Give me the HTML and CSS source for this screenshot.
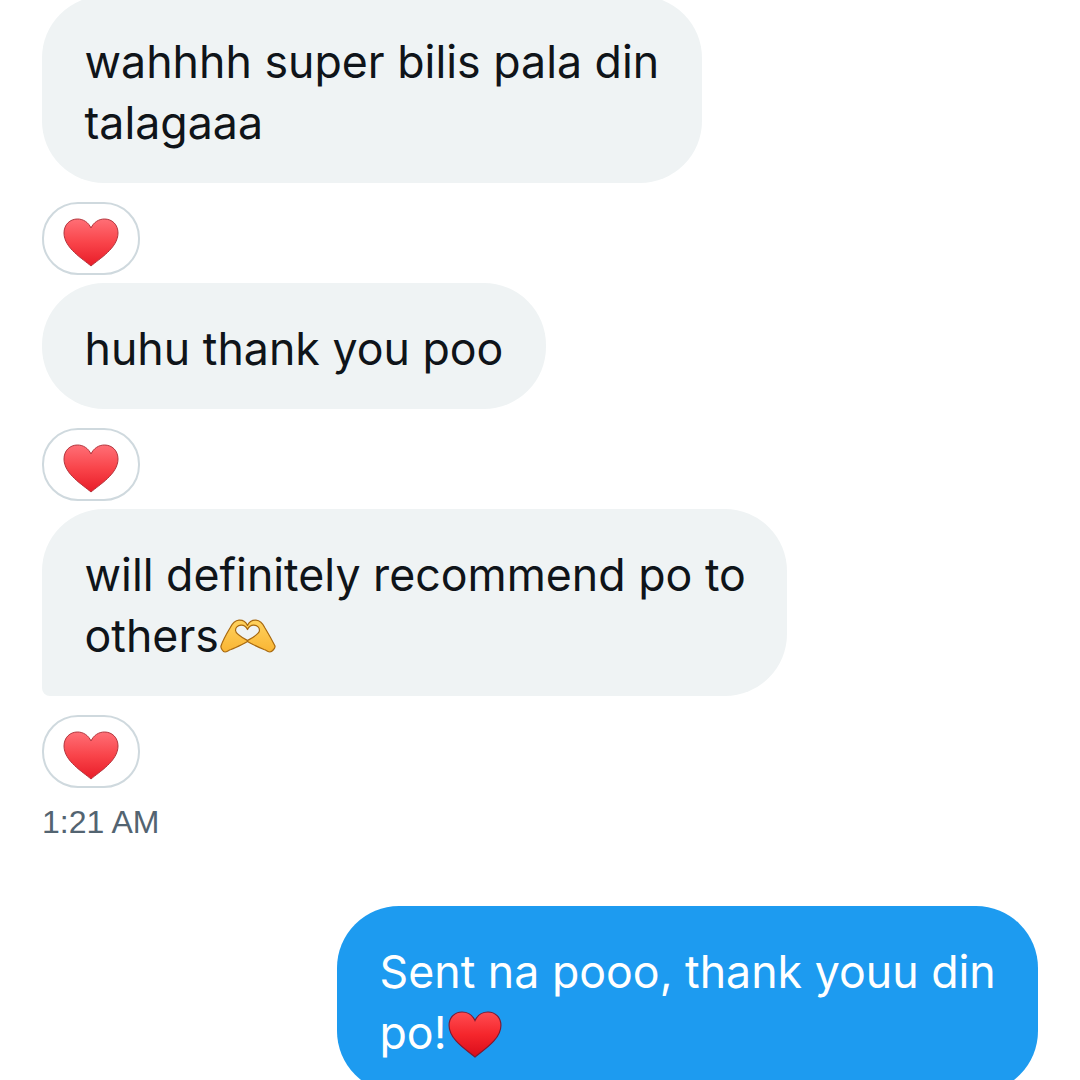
FILE: index.html
```html
<!DOCTYPE html>
<html>
<head>
  <title>Messages</title>
  <link rel="stylesheet" href="styles.css">
</head>
<body>
  <svg class="defs" width="0" height="0">
    <defs>
      <linearGradient id="heart-fill" x1="0" y1="0" x2="0" y2="1">
        <stop offset="0" stop-color="#ff6f76"/>
        <stop offset="0.5" stop-color="#f9444a"/>
        <stop offset="1" stop-color="#e81c28"/>
      </linearGradient>
      <linearGradient id="heart-fill-inline" x1="0" y1="0" x2="0" y2="1">
        <stop offset="0" stop-color="#ff4d52"/>
        <stop offset="0.5" stop-color="#f5262c"/>
        <stop offset="1" stop-color="#d90c1a"/>
      </linearGradient>
      <linearGradient id="hand-fill" x1="0" y1="0" x2="0" y2="1">
        <stop offset="0" stop-color="#ffd25e"/>
        <stop offset="1" stop-color="#f9b534"/>
      </linearGradient>
      <symbol id="heart" viewBox="0 0 56 50">
        <path d="M28 48C20 41 1 30 1 15C1 6.500 7 1 14.500 1C20.500 1 25.500 4.500 28 10C30.500 4.500 35.500 1 41.500 1C49 1 55 6.500 55 15C55 30 36 41 28 48Z" fill="url(#heart-fill)" stroke="#b3343c" stroke-width="1"/>
      </symbol>
      <symbol id="heart-inline" viewBox="0 0 56 50">
        <path d="M28 48C20 41 1 30 1 15C1 6.500 7 1 14.500 1C20.500 1 25.500 4.500 28 10C30.500 4.500 35.500 1 41.500 1C49 1 55 6.500 55 15C55 30 36 41 28 48Z" fill="url(#heart-fill-inline)" stroke="#7a1a34" stroke-width="1.200"/>
      </symbol>
    </defs>
  </svg>

  <div class="thread">
    <div class="bubble bubble-first">wahhhh super bilis pala din<br>talagaaa</div>
    <div class="reaction"><svg class="heart"><use href="#heart"/></svg></div>

    <div class="bubble">huhu thank you poo</div>
    <div class="reaction"><svg class="heart"><use href="#heart"/></svg></div>

    <div class="bubble bubble-last">will definitely recommend po to<br>others<svg class="hands" viewBox="0 0 56 34"><path d="M1 27C3 21 7 14 10 9C12 5 15 1.500 19 1.200C23 1 26 3 27.500 6.500C29 3 32 1 36 1.200C40 1.500 43 5 45 9C48 14 52 21 55 27C55.500 29 52 33 50 33C48 33 47 31.500 44 30.500C40 29 36 27 33 25.500C31 24.500 29 23.500 27.500 22.500C26 23.500 24 24.500 22 25.500C19 27 15 29 11 30.500C8 31.500 7 33 5 33C3 33 .5 29 1 27ZM27.500 10.500C26 7.500 23.500 6 21 6.200C17.500 6.500 15.500 9 15.500 11.500C15.500 15 22 18.500 27.500 21.500C33 18.500 39.500 15 39.500 11.500C39.500 9 37.500 6.500 34 6.200C31.500 6 29 7.500 27.500 10.500Z" fill="url(#hand-fill)" fill-rule="evenodd" stroke="#a8690f" stroke-width="1.200" stroke-linejoin="round"/></svg></div>
    <div class="reaction"><svg class="heart"><use href="#heart"/></svg></div>
    <div class="time">1:21 AM</div>

    <div class="bubble bubble-sent">Sent na pooo, thank youu din<br>po!<svg class="heart heart-inline"><use href="#heart-inline"/></svg></div>
  </div>
</body>
</html>
```

FILE: styles.css
```css
html, body {
  height: 100%;
  margin: 0;
  padding: 0;
}

body {
  background-color: #fff;
  overflow: hidden;
  font-family: "Inter", "Noto Sans", sans-serif;
}

.defs {
  display: block;
}

.thread {
  display: flex;
  flex-direction: column;
  align-items: flex-start;
  margin-top: -4px;
  padding: 0 42px;
}

.bubble {
  box-sizing: border-box;
  width: fit-content;
  padding: 36px 43px 29px 42.5px;
  font-size: 44.7px;
  line-height: 61px;
  white-space: nowrap;
  color: #0f1419;
  background-color: #eff3f4;
  border-radius: 62px;
}

.bubble-first {
  width: 660px;
}

.bubble-last {
  width: 745px;
  border-bottom-left-radius: 8px;
}

.bubble-sent {
  align-self: flex-end;
  width: 701px;
  margin-top: 64px;
  color: #fff;
  background-color: #1d9bf0;
}

.reaction {
  box-sizing: border-box;
  display: flex;
  align-items: center;
  justify-content: center;
  width: 98px;
  height: 73px;
  margin: 19px 0 8px;
  padding-top: 8px;
  border: 2px solid #cfd9de;
  border-radius: 36px;
  background-color: #fff;
}

.heart {
  width: 56px;
  height: 50px;
}

.heart-inline {
  width: 54px;
  height: 48px;
  vertical-align: -10px;
  margin-left: 1px;
}

.hands {
  width: 56px;
  height: 34px;
  margin-left: 1px;
  vertical-align: -1px;
}

.time {
  margin-top: 6px;
  font-family: "Liberation Sans", sans-serif;
  font-size: 32px;
  line-height: 40px;
  color: #536471;
}
```
